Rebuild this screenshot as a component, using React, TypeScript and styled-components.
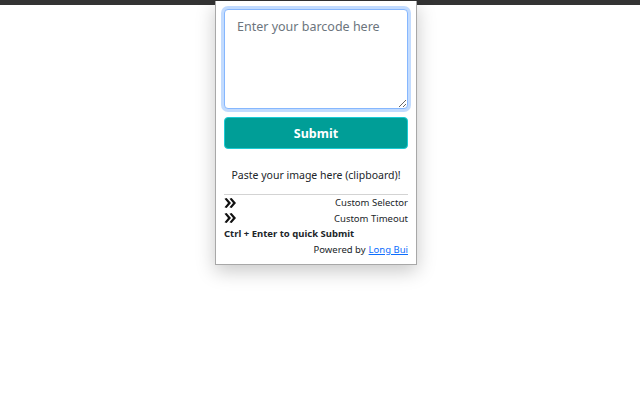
import React from "react";
import styled, { createGlobalStyle } from "styled-components";

const GlobalStyle = createGlobalStyle`
  html, body {
    margin: 0;
    padding: 0;
    background: #ffffff;
    font-family: "Noto Sans", "Open Sans", sans-serif;
  }
`;

const Page = styled.div`
  position: relative;
  width: 640px;
  height: 400px;
  overflow: hidden;
  background: #ffffff;
`;

const TopBar = styled.div`
  height: 5px;
  background: #333333;
`;

const Popup = styled.div`
  position: absolute;
  left: 215px;
  top: 1px;
  width: 184px;
  border: 1px solid #a8a8a8;
  border-top: none;
  background: #ffffff;
  padding: 8px 8px 7px;
  box-shadow: 0 6px 18px rgba(0, 0, 0, 0.22);
  display: flex;
  flex-direction: column;
`;

const BarcodeInput = styled.textarea`
  box-sizing: border-box;
  width: 184px;
  height: 100px;
  margin: 0;
  padding: 7px 12px;
  border: 1px solid #86b7fe;
  border-radius: 4px;
  outline: none;
  box-shadow: 0 0 0 3px rgba(13, 110, 253, 0.25);
  font-family: "Noto Sans", "Open Sans", sans-serif;
  font-size: 12.5px;
  line-height: 20px;
  color: #212529;
  resize: vertical;

  &::placeholder {
    color: #6c757d;
  }
`;

const SubmitButton = styled.button`
  margin-top: 8px;
  height: 32px;
  width: 184px;
  border: 1px solid #1ccbd4;
  border-radius: 4px;
  background: #009e97;
  color: #ffffff;
  font-family: "Noto Sans", "Open Sans", sans-serif;
  font-size: 12.5px;
  font-weight: 700;
  cursor: pointer;
`;

const PasteHint = styled.div`
  margin-top: 18px;
  text-align: center;
  font-size: 10.5px;
  color: #212529;
  line-height: 16px;
`;

const Divider = styled.hr`
  margin: 11px 0 0;
  border: none;
  border-top: 1px solid #d3d3d3;
`;

const Row = styled.div<{ $align?: "between" | "end" | "start" }>`
  display: flex;
  align-items: center;
  justify-content: ${({ $align }) =>
    $align === "end" ? "flex-end" : $align === "start" ? "flex-start" : "space-between"};
  height: 15.6px;
  font-size: 9.5px;
  color: #212529;
`;

const Strong = styled.span`
  font-weight: 700;
`;

const Link = styled.a`
  color: #0d6efd;
  text-decoration: underline;
  margin-left: 3px;
`;

const Chevrons = () => (
  <svg width="13" height="10" viewBox="0 0 13 10">
    <path d="M0.5 0.8 L2.6 0 L7 5 L2.6 10 L0.5 9.2 L4 5 Z" fill="#111" />
    <path d="M5.5 0.8 L7.6 0 L12 5 L7.6 10 L5.5 9.2 L9 5 Z" fill="#111" />
  </svg>
);

export default function App() {
  return (
    <Page>
      <GlobalStyle />
      <TopBar />
      <Popup>
        <BarcodeInput placeholder="Enter your barcode here" />
        <SubmitButton>Submit</SubmitButton>
        <PasteHint>Paste your image here (clipboard)!</PasteHint>
        <Divider />
        <Row>
          <Chevrons />
          <span>Custom Selector</span>
        </Row>
        <Row>
          <Chevrons />
          <span>Custom Timeout</span>
        </Row>
        <Row $align="start">
          <Strong>Ctrl + Enter to quick Submit</Strong>
        </Row>
        <Row $align="end">
          Powered by<Link href="#">Long Bui</Link>
        </Row>
      </Popup>
    </Page>
  );
}
